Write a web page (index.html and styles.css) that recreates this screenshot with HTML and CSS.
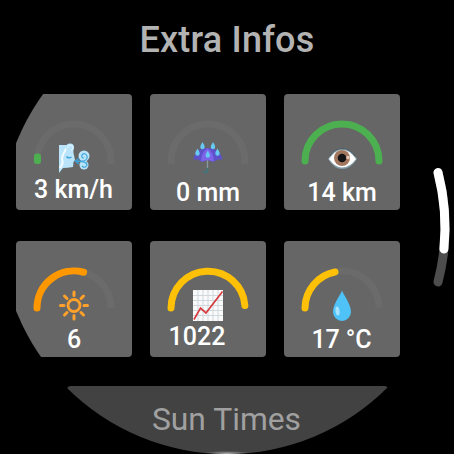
FILE: index.html
```html
<!DOCTYPE html>
<html lang="en">
<head>
<meta charset="utf-8">
<title>Extra Infos</title>
<link rel="stylesheet" href="styles.css">
</head>
<body>
<main class="screen">
  <h1 class="title">Extra Infos</h1>
  <section class="grid">
    <article class="tile">
      <svg class="gauge" viewBox="0 0 116 82">
        <path class="track" d="M21 70V67A37 37 0 0 1 95 67V70"/>
        <rect x="18" y="59.500" width="7" height="10.500" rx="3" fill="#4caf50"/>
        <path d="M43 51H51Q58 52 57.500 59L59 66 57.500 68 57 73Q51 74 47 74L43 79Z" fill="#b9e4fa"/>
        <path d="M43.500 74Q48 70 46 65 46 61 49 57 50 53 54 54" fill="none" stroke="#f2fbff" stroke-width="2"/>
        <circle cx="54" cy="53.500" r="4" fill="#b9e4fa"/>
        <path d="M52 54a2.500 2.500 0 1 1 3 2" fill="none" stroke="#d9f2ff" stroke-width="1.200"/>
        <path d="M50.500 62.500q2 2.500 5 .5" fill="none" stroke="#389fd8" stroke-width="1.400"/>
        <circle cx="68" cy="62" r="5.500" fill="#b9e4fa"/>
        <circle cx="68" cy="71" r="4.500" fill="#b9e4fa"/>
        <path d="M60 67H67Q72 66 71 62 69 58 66 61 65 64 68 64M60 67.500Q71 67 71 71 69 75 66 72" fill="none" stroke="#45a8dc" stroke-width="1.200"/>
        <path d="M59 67l4-2.500M59 67l4 3" fill="none" stroke="#389fd8" stroke-width="1.300"/>
      </svg>
      <p class="value up3">3 km/h</p>
    </article>
    <article class="tile">
      <svg class="gauge" viewBox="0 0 116 82">
        <path class="track" d="M21 70V67A37 37 0 0 1 95 67V70"/>
        <path d="M57.500 64V74" fill="none" stroke="#8798a0" stroke-width="1.300"/>
        <path d="M57.500 74V77Q56 80 53.500 77" fill="none" stroke="#3b7880" stroke-width="1.500"/>
        <path d="M43.500 65.500C45 57 50 54 57.500 54 65 54 71 57 72.500 65.500L68 65.500 63 68 57.500 66 52 68 48 65.500Z" fill="#5d52ca"/>
        <path d="M51 67.500Q51 59 57.500 54 64 59 64 67.500L57.500 66Z" fill="#7e64e8"/>
        <g fill="#68c9f3">
          <path id="drop" d="M52.500 48C51 50.500 50.300 51.500 50.300 53a2.200 2.200 0 0 0 4.400 0C54.700 51.500 54 50.500 52.500 48Z"/>
          <use href="#drop" x="10.500"/>
          <use href="#drop" x="-5" y="6.500"/>
          <use href="#drop" x="5.300" y="8.500"/>
          <use href="#drop" x="15" y="6.500"/>
        </g>
      </svg>
      <p class="value">0 mm</p>
    </article>
    <article class="tile">
      <svg class="gauge" viewBox="0 0 116 82">
        <path class="arc green" d="M21 67A37 37 0 0 1 95 67"/>
        <path d="M44 65Q50 54 58 54 67 54 73 65 67 75 58 75 50 75 44 65Z" fill="#829daa"/>
        <path d="M45 65Q51 56 58 56 66 56 72 65 66 73.500 58 73.500 51 73.500 45 65Z" fill="#fff"/>
        <path d="M46 62Q51 54.500 58 54.500 66 54.500 71 62" fill="none" stroke="#4d555a" stroke-width="1"/>
        <circle cx="58" cy="64" r="8" fill="#a1775f"/>
        <circle cx="58" cy="64" r="4.300" fill="#141414"/>
        <circle cx="64" cy="63.500" r="1.800" fill="#e3c3b2"/>
      </svg>
      <p class="value">14 km</p>
    </article>
    <article class="tile">
      <svg class="gauge" viewBox="0 0 116 82">
        <path class="track" d="M21 67A37 37 0 0 1 95 67"/>
        <path class="arc orange" d="M21 67A37 37 0 0 1 67.600 31.250"/>
        <g fill="none" stroke="#ffa12b" stroke-width="3" stroke-linecap="round">
          <circle cx="58" cy="64.500" r="6" stroke-width="2.800"/>
          <path d="M58 51V54.500M58 74.500V78M44.500 64.500H48M68 64.500H71.500M48.500 55L51 57.500M67.500 55L65 57.500M48.500 74L51 71.500M67.500 74L65 71.500"/>
        </g>
      </svg>
      <p class="value up1">6</p>
    </article>
    <article class="tile">
      <svg class="gauge" viewBox="0 0 116 82">
        <path class="arc yellow" d="M21 67A37 37 0 0 1 94.900 64.500"/>
        <path d="M43 49H73V80H43Z" fill="#fafafa"/>
        <path d="M48 49V80M53 49V80M58 49V80M63 49V80M68 49V80M43 54.500H73M43 59.500H73M43 64.500H73M43 69.500H73M43 74.500H73" stroke="#cfd8dc" stroke-width="1"/>
        <path d="M44 78.500L50.500 67 56 72 72.500 50.500" fill="none" stroke="#d83b3f" stroke-width="1.700"/>
      </svg>
      <p class="value up3 left">1022</p>
    </article>
    <article class="tile">
      <svg class="gauge" viewBox="0 0 116 82">
        <path class="track" d="M21 67A37 37 0 0 1 95 67"/>
        <path class="arc yellow" d="M21 67A37 37 0 0 1 51 31"/>
        <path d="M58 49.500C60 55 67 63 67 71A9 9 0 0 1 49 71C49 63 56 55 58 49.500Z" fill="#4fc3f7"/>
        <ellipse cx="53.500" cy="70" rx="2" ry="4.500" transform="rotate(-8 53.500 70)" fill="#a5e2fb"/>
      </svg>
      <p class="value tight">17 °C</p>
    </article>
  </section>
  <div class="chip">Sun Times</div>
</main>
<svg class="scrollbar" viewBox="0 0 454 454">
  <path d="M438 172.500A218 218 0 0 1 438 282" stroke="#4d4d4d"/>
  <path d="M438 172.500A218 218 0 0 1 443.900 249" stroke="#fff"/>
</svg>
</body>
</html>
```
FILE: styles.css
```css
* { box-sizing: border-box; }
body {
  margin: 0;
  background: #000;
  font-family: Roboto, sans-serif;
  overflow: hidden;
}
.screen {
  width: 454px;
  height: 454px;
  overflow: hidden;
  clip-path: circle(227px at 227px 227px);
  padding: 19px 16px 0;
}
.title {
  margin: 0;
  height: 75px;
  line-height: 42px;
  font-size: 36px;
  font-weight: 500;
  letter-spacing: 0.2px;
  text-align: center;
  color: #b3b3b3;
}
.grid {
  display: grid;
  grid-template-columns: repeat(3, 116px);
  grid-auto-rows: 116px;
  gap: 31px 18px;
}
.tile {
  background: #666;
  border-radius: 4px;
}
.gauge {
  display: block;
  width: 116px;
  height: 82px;
}
.track {
  fill: none;
  stroke: #6b6b6b;
  stroke-width: 7;
}
.arc {
  fill: none;
  stroke-width: 7;
  stroke-linecap: round;
}
.green { stroke: #4caf50; }
.orange { stroke: #ff9800; }
.yellow { stroke: #ffc107; }
.value {
  margin: 3px 0 0;
  line-height: 28px;
  font-size: 25px;
  font-weight: 500;
  text-align: center;
  white-space: nowrap;
  color: #fff;
}
.up1 { margin-top: 3px; }
.up3 { margin-top: 0; padding-right: 1px; }
.left { padding-right: 22px; }
.tight { letter-spacing: -0.1px; padding-right: 1px; }
.chip {
  height: 104px;
  margin: 29px 50px 0 51px;
  padding: 15px 2px 0 0;
  border-radius: 4px;
  background: radial-gradient(ellipse 26px 3px at 160px 68px, #bbb, #424242);
  line-height: 36px;
  font-size: 31.8px;
  text-align: center;
  color: #a0a0a0;
}
.scrollbar {
  position: absolute;
  inset: 0;
  width: 454px;
  height: 454px;
  fill: none;
  stroke-width: 9;
  stroke-linecap: round;
}
```
